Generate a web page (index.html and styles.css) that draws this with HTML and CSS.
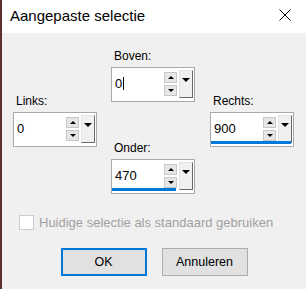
FILE: index.html
```html
<!DOCTYPE html>
<html lang="nl">

<head>
    <meta charset="UTF-8">
    <meta name="viewport" content="width=device-width, initial-scale=1.0">
    <title>Aangepaste selectie</title>
    <link rel="stylesheet" href="styles.css">
</head>

<body>
    <div class="window">
        <!-- title bar -->
        <div class="titlebar">
            <span class="title">Aangepaste selectie</span>
            <svg class="close" width="12" height="12" viewBox="0 0 12 12">
                <path d="M0.5 0.5 L11.5 11.5 M11.5 0.5 L0.5 11.5" stroke="#000" stroke-width="1" fill="none" />
            </svg>
        </div>

        <div class="content">
            <!-- the four spin fields -->
            <div class="fields">
                <div class="col col-side">
                    <div class="field">
                        <div class="label">Links:</div>
                        <div class="box">
                            <span class="value">0</span>
                            <div class="spin"><span class="up"></span><span class="down"></span></div>
                            <div class="drop"></div>
                        </div>
                    </div>
                </div>

                <div class="col">
                    <div class="field">
                        <div class="label">Boven:</div>
                        <div class="box">
                            <span class="value">0<span class="caret"></span></span>
                            <div class="spin"><span class="up"></span><span class="down"></span></div>
                            <div class="drop"></div>
                        </div>
                    </div>
                    <div class="field field-low">
                        <div class="label">Onder:</div>
                        <div class="box">
                            <span class="value">470</span>
                            <div class="spin"><span class="up"></span><span class="down"></span></div>
                            <div class="drop"></div>
                            <span class="focusbar focusbar-short"></span>
                        </div>
                    </div>
                </div>

                <div class="col col-side col-right">
                    <div class="field">
                        <div class="label">Rechts:</div>
                        <div class="box">
                            <span class="value">900</span>
                            <div class="spin"><span class="up"></span><span class="down"></span></div>
                            <div class="drop"></div>
                            <span class="focusbar focusbar-long"></span>
                        </div>
                    </div>
                </div>
            </div>

            <!-- disabled checkbox -->
            <div class="check">
                <span class="checkbox"></span>
                <span class="check-label">Huidige selectie als standaard gebruiken</span>
            </div>

            <!-- dialog buttons -->
            <div class="buttons">
                <button class="btn btn-default">OK</button>
                <button class="btn">Annuleren</button>
            </div>
        </div>
    </div>
</body>

</html>
```

FILE: styles.css
```css
body {
    margin: 0;
    background-color: #f0f0f0;
    font-family: "Liberation Sans", Arial, sans-serif;
    color: #000;
}

.window {
    width: 304px;
    height: 289px;
    border-left: 2px solid #5e2f2f;
    background-color: #f0f0f0;
}

/* title bar */
.titlebar {
    height: 33px;
    box-sizing: border-box;
    padding: 7px 15px 0 8px;
    background-color: #fff;
    display: flex;
    justify-content: space-between;
    align-items: flex-start;
}

.title {
    font-size: 15px;
    line-height: 17px;
}

.close {
    margin-top: 2px;
}

/* dialog body */
.content {
    padding: 16px 0 0 11px;
}

.fields {
    display: flex;
    gap: 14px;
}

.col {
    width: 84px;
    display: flex;
    flex-direction: column;
}

.col-side {
    padding-top: 45px;
}

.col-right {
    margin-left: 1px;
}

.field-low {
    margin-top: 39px;
}

.label {
    font-size: 12px;
    line-height: 15px;
    padding-left: 3px;
    margin-bottom: 3px;
}

.box {
    position: relative;
    height: 35px;
    box-sizing: border-box;
    border: 1px solid #a9a9a9;
    background-color: #fff;
    display: flex;
    align-items: flex-start;
}

.value {
    flex: 1;
    font-size: 13px;
    line-height: 15px;
    margin-top: 8px;
    padding-left: 3px;
}

.caret {
    display: inline-block;
    width: 1px;
    height: 13px;
    background-color: #000;
    margin-left: 1px;
    vertical-align: -2px;
}

/* up / down spin buttons */
.spin {
    width: 13px;
    margin-top: 4px;
    display: flex;
    flex-direction: column;
    gap: 2px;
}

.up,
.down {
    position: relative;
    height: 11px;
    box-sizing: border-box;
    border: 1px solid #c6c6c6;
    background-color: #e6e6e6;
}

.up::after,
.down::after {
    content: "";
    position: absolute;
    left: 3px;
    top: 3px;
    border-left: 3px solid transparent;
    border-right: 3px solid transparent;
}

.up::after {
    border-bottom: 3px solid #000;
}

.down::after {
    border-top: 3px solid #000;
}

/* drop down button */
.drop {
    position: relative;
    width: 14px;
    height: 28px;
    box-sizing: border-box;
    margin: 2px 1px 0 2px;
    background-color: #f0f0f0;
    border-left: 1px solid #e3e3e3;
    border-top: 1px solid #e3e3e3;
    border-right: 1px solid #696969;
    border-bottom: 1px solid #696969;
}

.drop::after {
    content: "";
    position: absolute;
    left: 2px;
    top: 7px;
    border-left: 4px solid transparent;
    border-right: 4px solid transparent;
    border-top: 4px solid #000;
}

.focusbar {
    position: absolute;
    left: 0;
    bottom: 2px;
    height: 3px;
    background-color: #0078d7;
}

.focusbar-short {
    width: 64px;
}

.focusbar-long {
    width: 80px;
}

/* checkbox row */
.check {
    margin-top: 21px;
    padding-left: 6px;
    display: flex;
    align-items: center;
    gap: 5px;
}

.checkbox {
    width: 15px;
    height: 15px;
    box-sizing: border-box;
    border: 1px solid #cccccc;
    background-color: #fff;
}

.check-label {
    font-size: 13px;
    line-height: 15px;
    color: #a0a0a0;
}

/* buttons */
.buttons {
    margin: 18px 0 0 -11px;
    display: flex;
    justify-content: center;
    gap: 15px;
}

.btn {
    width: 86px;
    height: 28px;
    box-sizing: border-box;
    padding: 0;
    font-family: "Liberation Sans", Arial, sans-serif;
    font-size: 12.5px;
    color: #000;
    background-color: #e1e1e1;
    border: 1px solid #adadad;
    border-radius: 0;
}

.btn-default {
    border: 2px solid #0078d7;
}
```
